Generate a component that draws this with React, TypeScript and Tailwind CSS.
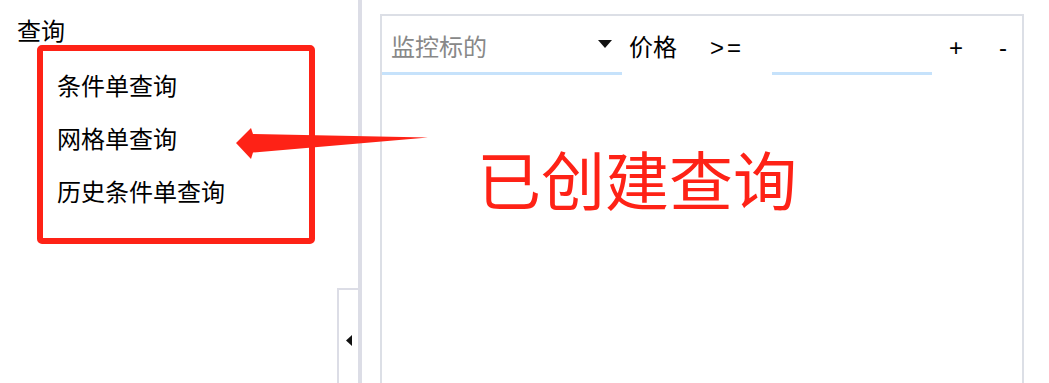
import React from "react";

const CJK = { fontFamily: '"Noto Sans CJK SC", "Noto Sans", sans-serif' };
const LAT = { fontFamily: '"Liberation Sans", Arial, sans-serif' };

export default function App() {
  return (
    <div className="relative flex w-[1049px] h-[383px] overflow-hidden bg-white text-black" style={CJK}>
      {/* Sidebar */}
      <div className="relative w-[358px] h-full shrink-0">
        <div className="pl-[17px] pt-[14px] h-[45px] text-[24px] leading-[32px]">查询</div>
        <div className="ml-[37px] w-[278px] h-[199px] border-[6px] border-[#fe2216] rounded-[5px] pl-[14px] pt-[7px]">
          <div className="text-[24px] leading-[53px]">条件单查询</div>
          <div className="text-[24px] leading-[53px]">网格单查询</div>
          <div className="text-[24px] leading-[53px]">历史条件单查询</div>
        </div>
        <div className="absolute left-[337px] top-[288px] w-[21px] h-[110px] border-l-2 border-t-2 border-[#dcdde6] flex items-start justify-center pt-[45px]">
          <svg width="6" height="11" viewBox="0 0 6 11">
            <polygon points="6,0 6,11 0,5.5" fill="#111" />
          </svg>
        </div>
      </div>
      {/* Splitter bar */}
      <div className="w-[4px] h-full shrink-0 bg-[#dcdde6]" />
      <div className="w-[18px] shrink-0" />
      {/* Panel */}
      <div className="mt-[14px] w-[644px] h-[420px] shrink-0 border-2 border-[#dcdfe6]">
        <div className="flex items-start">
          <div className="w-[240px] h-[59px] border-b-[3px] border-[#c6e2fb] pt-[14px] pl-[9px] pr-[10px] flex items-start justify-between">
            <span className="text-[24px] leading-[32px] text-[#888888]">监控标的</span>
            <svg width="14" height="8" viewBox="0 0 14 8" className="mt-[10px]">
              <polygon points="0,0 14,0 7,8" fill="#111" />
            </svg>
          </div>
          <div className="ml-[7px] pt-[14px] text-[24px] leading-[32px] w-[48px]">价格</div>
          <div className="ml-[33px] pt-[16px] w-[62px] text-[24px] leading-[32px] tracking-[3px]" style={LAT}>
            &gt;=
          </div>
          <div className="w-[160px] h-[59px] border-b-[3px] border-[#c6e2fb]" />
          <div className="ml-[17px] pt-[16px] w-[14px] text-[24px] leading-[32px]" style={LAT}>+</div>
          <div className="ml-[36px] pt-[16px] text-[24px] leading-[32px]" style={LAT}>-</div>
        </div>
        <div className="mt-[70px] ml-[95px] text-[64px] leading-[64px] text-[#fe2216]">已创建查询</div>
      </div>
      {/* Annotation arrow */}
      <svg className="absolute left-0 top-0 pointer-events-none" width="1049" height="383" viewBox="0 0 1049 383">
        <polygon
          points="236,143 251,128 253,134 428,137.5 253,152.5 251,159"
          fill="#fe2216"
        />
      </svg>
    </div>
  );
}
